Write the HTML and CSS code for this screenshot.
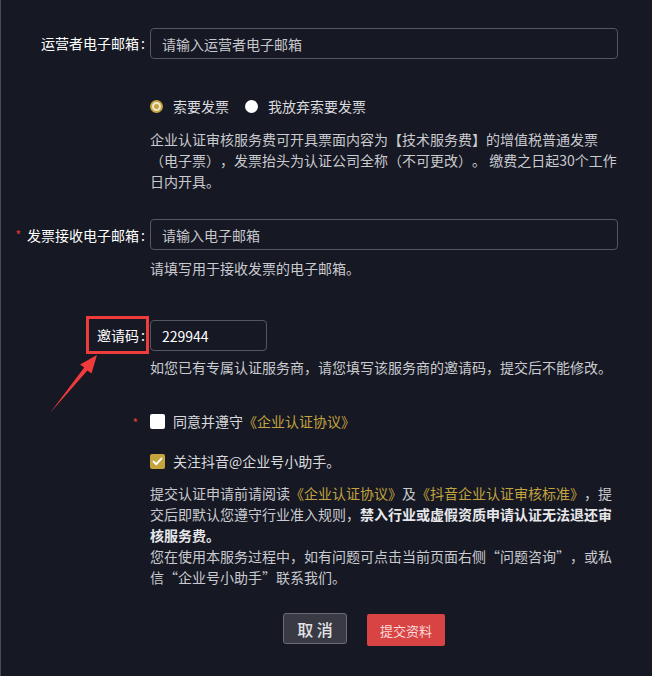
FILE: index.html
```html
<!DOCTYPE html>
<html lang="zh-CN">
<head>
<meta charset="utf-8">
<title>企业认证</title>
<link rel="stylesheet" href="styles.css">
</head>
<body>
<div class="page">
  <div class="row field first">
    <label class="label">运营者电子邮箱<span class="colon">:</span></label>
    <input class="input" type="text" placeholder="请输入运营者电子邮箱">
  </div>

  <div class="row radios">
    <span></span>
    <div class="radio-group">
      <span class="radio on"></span><span class="opt opt-first">索要发票</span>
      <span class="radio"></span><span class="opt">我放弃索要发票</span>
    </div>
  </div>

  <div class="row desc1">
    <span></span>
    <p class="desc">企业认证审核服务费可开具票面内容为【技术服务费】的增值税普通发票<br>（电子票），发票抬头为认证公司全称（不可更改）。 缴费之日起30个工作日内开具。</p>
  </div>

  <div class="row field second">
    <label class="label"><span class="req">*</span>发票接收电子邮箱<span class="colon">:</span></label>
    <input class="input" type="text" placeholder="请输入电子邮箱">
  </div>
  <div class="row hint h1">
    <span></span>
    <p class="desc">请填写用于接收发票的电子邮箱。</p>
  </div>

  <div class="row field third">
    <label class="label invite">邀请码<span class="colon">:</span></label>
    <input class="input short" type="text" value="229944">
  </div>
  <div class="row hint h2">
    <span></span>
    <p class="desc">如您已有专属认证服务商，请您填写该服务商的邀请码，提交后不能修改。</p>
  </div>

  <div class="row check c1">
    <span class="req-cell"><span class="req">*</span></span>
    <div class="check-line">
      <span class="box"></span><span class="opt">同意并遵守<span class="link">《企业认证协议》</span></span>
    </div>
  </div>
  <div class="row check c2">
    <span></span>
    <div class="check-line">
      <span class="box on"><svg viewBox="0 0 15 15" width="15" height="15"><path d="M3.6 7.6 L6.3 10.2 L11.4 4.6" fill="none" stroke="#ffffff" stroke-width="2" stroke-linecap="round" stroke-linejoin="round"/></svg></span><span class="opt">关注抖音@企业号小助手。</span>
    </div>
  </div>

  <div class="row desc2">
    <span></span>
    <p class="desc">提交认证申请前请阅读<span class="link">《企业认证协议》</span>及<span class="link">《抖音企业认证审核标准》</span>，提交后即默认您遵守行业准入规则，<b class="strong">禁入行业或虚假资质申请认证无法退还审核服务费。</b><br>您在使用本服务过程中，如有问题可点击当前页面右侧“问题咨询”，或私信“企业号小助手”联系我们。</p>
  </div>

  <div class="actions">
    <button class="btn cancel">取 消</button>
    <button class="btn submit">提交资料</button>
  </div>

  <div class="mark-box"></div>
  <svg class="arrow" width="652" height="676" viewBox="0 0 652 676">
    <polygon points="97,355 80,364.5 84.2,367.6 50,413 87.4,370.4 91.5,373.6" fill="#f03b3b"/>
  </svg>
</div>
</body>
</html>
```

FILE: styles.css
```css
* { box-sizing: border-box; }

html, body {
  margin: 0;
  padding: 0;
}

body {
  background: #161823;
  font-family: "Noto Sans CJK SC", "Noto Sans", sans-serif;
  font-size: 14px;
  color: #ffffff;
  text-spacing-trim: space-all;
}

.page {
  position: relative;
  width: 652px;
  height: 676px;
  border-left: 1px solid #4a4b53;
  padding-top: 28px;
  overflow: hidden;
}

.row {
  display: grid;
  grid-template-columns: 149px 468px;
}

.label {
  text-align: right;
  padding-right: 5px;
  line-height: 31px;
  color: #ffffff;
  white-space: nowrap;
}

.colon {
  margin-left: 2px;
}

.req {
  color: #f0383b;
  font-size: 12px;
  margin-right: 6px;
  vertical-align: 1px;
}

.input {
  height: 31px;
  width: 468px;
  border: 1px solid #55565f;
  border-radius: 4px;
  background: transparent;
  padding: 0 11px;
  color: #ffffff;
  font-family: inherit;
  font-size: 14px;
  outline: none;
}

.input::placeholder {
  color: #c6c7cc;
}

.input.short {
  width: 117px;
}

.radios { margin-top: 37px; }

.radio-group,
.check-line {
  display: flex;
  align-items: center;
  height: 21px;
  line-height: 21px;
}

.radio {
  position: relative;
  width: 13px;
  height: 13px;
  border-radius: 50%;
  background: #ffffff;
  flex: none;
}

.radio.on {
  background: #efe7cf;
  border: 2px solid #c5a43d;
}

.radio.on::after {
  content: "";
  position: absolute;
  left: 2px;
  top: 2px;
  width: 5px;
  height: 5px;
  border-radius: 50%;
  background: #c5a43d;
}

.opt {
  color: #d9dade;
  margin-left: 10px;
}

.opt-first { margin-right: 16px; }

.desc {
  margin: 0;
  line-height: 21px;
  color: #c9cacf;
  width: 470px;
}

.desc1 { margin-top: 12px; }
.second { margin-top: 27px; }
.h1 { margin-top: 7px; }
.third { margin-top: 41px; }
.h2 { margin-top: 6px; }
.c1 { margin-top: 33px; }
.c2 { margin-top: 18px; }
.desc2 { margin-top: 11px; }

.req-cell {
  text-align: right;
  padding-right: 12px;
  line-height: 21px;
}

.req-cell .req {
  margin-right: 0;
  vertical-align: -1px;
}

.box {
  width: 15px;
  height: 15px;
  border-radius: 2px;
  background: #ffffff;
  flex: none;
  display: flex;
}

.box.on {
  background: #c5a43d;
}

.check-line .opt { margin-left: 8px; }

.link {
  color: #c2a33f;
}

.strong {
  color: #e6e7ea;
  font-weight: 700;
}

.actions {
  display: flex;
  align-items: flex-start;
  gap: 20px;
  margin-top: 25px;
  padding-left: 282px;
}

.btn {
  font-family: inherit;
  border-radius: 3px;
  cursor: pointer;
}

.cancel {
  width: 64px;
  height: 31px;
  background: #393a44;
  border: 1px solid #6a6b74;
  color: #e2e3e6;
  font-size: 16px;
  font-weight: 500;
  padding: 0;
}

.submit {
  margin-top: 1px;
  width: 78px;
  height: 32px;
  background: #d84343;
  border: none;
  border-radius: 2px;
  color: #f8dada;
  font-size: 13px;
  padding: 0;
}

.mark-box {
  position: absolute;
  left: 85px;
  top: 316px;
  width: 63px;
  height: 38px;
  border: 3px solid #ee3b3b;
}

.arrow {
  position: absolute;
  left: -1px;
  top: 0;
  pointer-events: none;
}
```
